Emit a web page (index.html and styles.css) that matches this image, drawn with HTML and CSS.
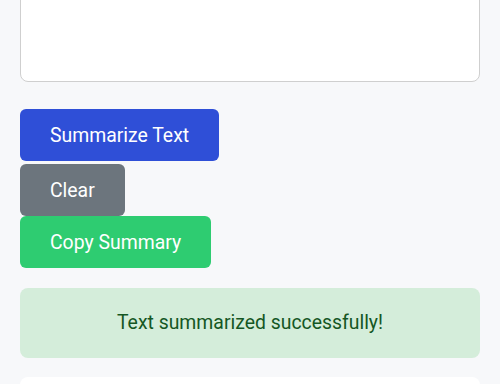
FILE: index.html
```html
<!DOCTYPE html>
<html lang="en">
<head>
<meta charset="utf-8">
<title>Text Summarizer</title>
<link rel="stylesheet" href="styles.css">
</head>
<body>
<main class="page">
  <textarea class="input" aria-label="Text to summarize"></textarea>
  <div class="actions">
    <button class="btn btn-primary">Summarize Text</button>
    <button class="btn btn-secondary">Clear</button>
    <button class="btn btn-success">Copy Summary</button>
  </div>
  <div class="alert">Text summarized successfully!</div>
  <section class="result"></section>
</main>
</body>
</html>
```

FILE: styles.css
```css
html, body {
  margin: 0;
  padding: 0;
  background: #f7f8fa;
  font-family: Roboto, "Liberation Sans", sans-serif;
}

.page {
  padding: 0 20px;
  margin-top: -120px;
  display: flex;
  flex-direction: column;
}

.input {
  display: block;
  box-sizing: border-box;
  width: 100%;
  height: 202px;
  border: 1px solid #cfcfcf;
  border-radius: 8px;
  background: #fff;
  resize: none;
  margin: 0;
}

.actions {
  margin-top: 27px;
  display: flex;
  flex-direction: column;
  align-items: flex-start;
}

.btn {
  font-family: Roboto, "Liberation Sans", sans-serif;
  font-size: 19.4px;
  line-height: 22px;
  padding: 16px 30px 14px;
  height: 52px;
  border: none;
  border-radius: 6px;
  color: #fff;
  cursor: pointer;
}

.btn-primary {
  background: #2f4fd7;
  margin-bottom: 3px;
}

.btn-secondary {
  background: #6c757d;
}

.btn-success {
  background: #2ecc71;
}

.alert {
  margin-top: 20px;
  height: 70px;
  box-sizing: border-box;
  padding: 24px;
  line-height: 22px;
  font-size: 19.4px;
  text-align: center;
  background: #d4edda;
  color: #155724;
  border-radius: 8px;
}

.result {
  margin-top: 19px;
  height: 200px;
  background: #fff;
  border-radius: 8px;
}
```
